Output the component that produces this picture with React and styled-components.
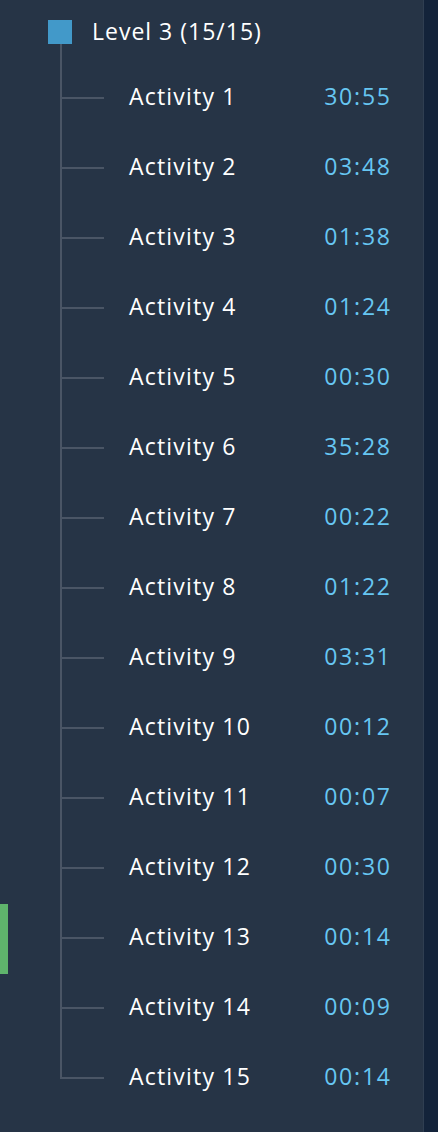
import React from 'react';
import styled, { createGlobalStyle } from 'styled-components';

const activities = [
  '30:55', '03:48', '01:38', '01:24', '00:30', '35:28', '00:22', '01:22',
  '03:31', '00:12', '00:07', '00:30', '00:14', '00:09', '00:14',
];

const GlobalStyle = createGlobalStyle`
  html, body {
    margin: 0;
    padding: 0;
    background: #263446;
  }
  body {
    font-family: 'Open Sans', 'Liberation Sans', sans-serif;
  }
`;

const App = () => (
  <Page>
    <GlobalStyle />
    <Panel>
      <LevelHeader>
        <LevelBox />
        <LevelTitle>Level 3 (15/15)</LevelTitle>
      </LevelHeader>
      <Tree>
        {activities.map((time, i) => (
          <Row key={i} $active={i === 12}>
            <RowName>Activity {i + 1}</RowName>
            <RowTime>{time}</RowTime>
          </Row>
        ))}
      </Tree>
    </Panel>
    <Strip />
  </Page>
);

const Page = styled.div`
  display: flex;
  min-height: 1132px;
`;

const Panel = styled.div`
  flex: 1;
  background: #263446;
  border-right: 1px solid #2f3e51;
  padding-top: 20px;
`;

const Strip = styled.div`
  width: 14px;
  background: #13233a;
`;

const LevelHeader = styled.div`
  display: flex;
  align-items: center;
  height: 24px;
  padding-left: 48px;
  gap: 20px;
`;

const LevelBox = styled.div`
  width: 24px;
  height: 24px;
  background: #4299c9;
`;

const LevelTitle = styled.div`
  color: #ffffff;
  font-size: 23px;
  letter-spacing: 1px;
  margin-top: -2px;
`;

const Tree = styled.div`
  position: relative;
  margin-left: 60px;
  padding-top: 19px;
  &::before {
    content: '';
    position: absolute;
    left: 0;
    top: 0;
    bottom: 34px;
    width: 2px;
    background: #4a5565;
  }
`;

const Row = styled.div`
  position: relative;
  display: flex;
  align-items: center;
  justify-content: space-between;
  box-sizing: border-box;
  height: 70px;
  padding: 0 0 5px 69px;
  width: 330px;
  &::after {
    content: '';
    position: absolute;
    left: 1px;
    top: 34px;
    width: 43px;
    height: 2px;
    background: #4a5565;
  }
  &::before {
    content: '';
    display: ${(p) => (p.$active ? 'block' : 'none')};
    position: absolute;
    left: -60px;
    top: 1px;
    width: 8px;
    height: 70px;
    background: #5fb46c;
  }
`;

const RowName = styled.div`
  color: #ffffff;
  font-size: 23px;
  letter-spacing: 1.2px;
`;

const RowTime = styled.div`
  color: #67c6f2;
  font-size: 23px;
  letter-spacing: 1.8px;
  margin-right: -1.8px;
`;

export default App;
